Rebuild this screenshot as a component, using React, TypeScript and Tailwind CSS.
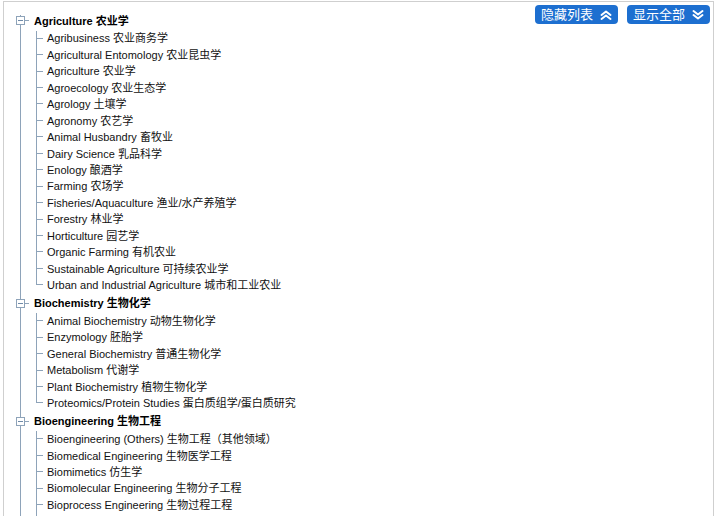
import React from 'react';

interface Category {
  name: string;
  items: string[];
  more?: boolean;
}

const categories: Category[] = [
  {
    name: 'Agriculture 农业学',
    items: [
      'Agribusiness 农业商务学',
      'Agricultural Entomology 农业昆虫学',
      'Agriculture 农业学',
      'Agroecology 农业生态学',
      'Agrology 土壤学',
      'Agronomy 农艺学',
      'Animal Husbandry 畜牧业',
      'Dairy Science 乳品科学',
      'Enology 酿酒学',
      'Farming 农场学',
      'Fisheries/Aquaculture 渔业/水产养殖学',
      'Forestry 林业学',
      'Horticulture 园艺学',
      'Organic Farming 有机农业',
      'Sustainable Agriculture 可持续农业学',
      'Urban and Industrial Agriculture 城市和工业农业',
    ],
  },
  {
    name: 'Biochemistry 生物化学',
    items: [
      'Animal Biochemistry 动物生物化学',
      'Enzymology 胚胎学',
      'General Biochemistry 普通生物化学',
      'Metabolism 代谢学',
      'Plant Biochemistry 植物生物化学',
      'Proteomics/Protein Studies 蛋白质组学/蛋白质研究',
    ],
  },
  {
    name: 'Bioengineering 生物工程',
    items: [
      'Bioengineering (Others) 生物工程（其他领域）',
      'Biomedical Engineering 生物医学工程',
      'Biomimetics 仿生学',
      'Biomolecular Engineering 生物分子工程',
      'Bioprocess Engineering 生物过程工程',
    ],
    more: true,
  },
];

const font = { fontFamily: '"Liberation Sans", "Noto Sans CJK SC", sans-serif' };

const Chevrons = ({ up }: { up: boolean }) => (
  <svg width="12" height="12" viewBox="0 0 12 12" fill="none" stroke="white" strokeWidth="2" strokeLinecap="round" strokeLinejoin="round">
    {up ? (
      <>
        <path d="M1.5 6 L6 2.5 L10.5 6" />
        <path d="M1.5 10 L6 6.5 L10.5 10" />
      </>
    ) : (
      <>
        <path d="M1.5 2 L6 5.5 L10.5 2" />
        <path d="M1.5 6 L6 9.5 L10.5 6" />
      </>
    )}
  </svg>
);

const Button = ({ label, up }: { label: string; up: boolean }) => (
  <button className="flex items-center gap-[7px] h-[19px] pl-[6px] pr-[6px] rounded-[4px] bg-[#1d6fd0] text-white text-[13px] leading-none">
    <span>{label}</span>
    <Chevrons up={up} />
  </button>
);

const App = () => {
  return (
    <div className="w-[720px] h-[516px] overflow-hidden bg-white pl-[3px] pt-[1px]" style={font}>
      <div className="w-[711px] h-[515px] border border-b-0 border-[#cfcfcf] flex items-start justify-between">
        <div className="ml-[16px] mt-[13px] border-l border-[#8ea3b9] flex-1 text-[11px] text-[#111]">
          {categories.map((cat, ci) => (
            <div key={ci} className={ci === 0 ? '-mt-[4px]' : ''}>
              <div className="flex items-center h-[19.5px] -ml-[5px]">
                <div className="w-[9px] h-[9px] border border-[#8ea3b9] bg-white flex items-center justify-center">
                  <div className="w-[5px] h-px bg-[#6f8aa8]" />
                </div>
                <div className="w-[4px] h-px bg-[#8ea3b9]" />
                <span className="ml-[5px] font-bold text-black">{cat.name}</span>
              </div>
              <div className="ml-[15px]">
                {cat.items.map((item, i) => {
                  const last = i === cat.items.length - 1 && !cat.more;
                  return (
                    <div key={i} className="flex items-center h-[16.45px]">
                      <div className="w-[7px] self-stretch flex flex-col">
                        <div className="h-1/2 border-l border-b border-[#8ea3b9]" />
                        <div className={last ? 'h-1/2' : 'h-1/2 border-l border-[#8ea3b9]'} />
                      </div>
                      <span className="ml-[4px] whitespace-nowrap">{item}</span>
                    </div>
                  );
                })}
                {cat.more && <div className="h-[20px] border-l border-[#8ea3b9]" />}
              </div>
            </div>
          ))}
        </div>
        <div className="flex gap-[9px] mt-[3px] mr-[3px]">
          <Button label="隐藏列表" up={true} />
          <Button label="显示全部" up={false} />
        </div>
      </div>
    </div>
  );
};

export default App;
